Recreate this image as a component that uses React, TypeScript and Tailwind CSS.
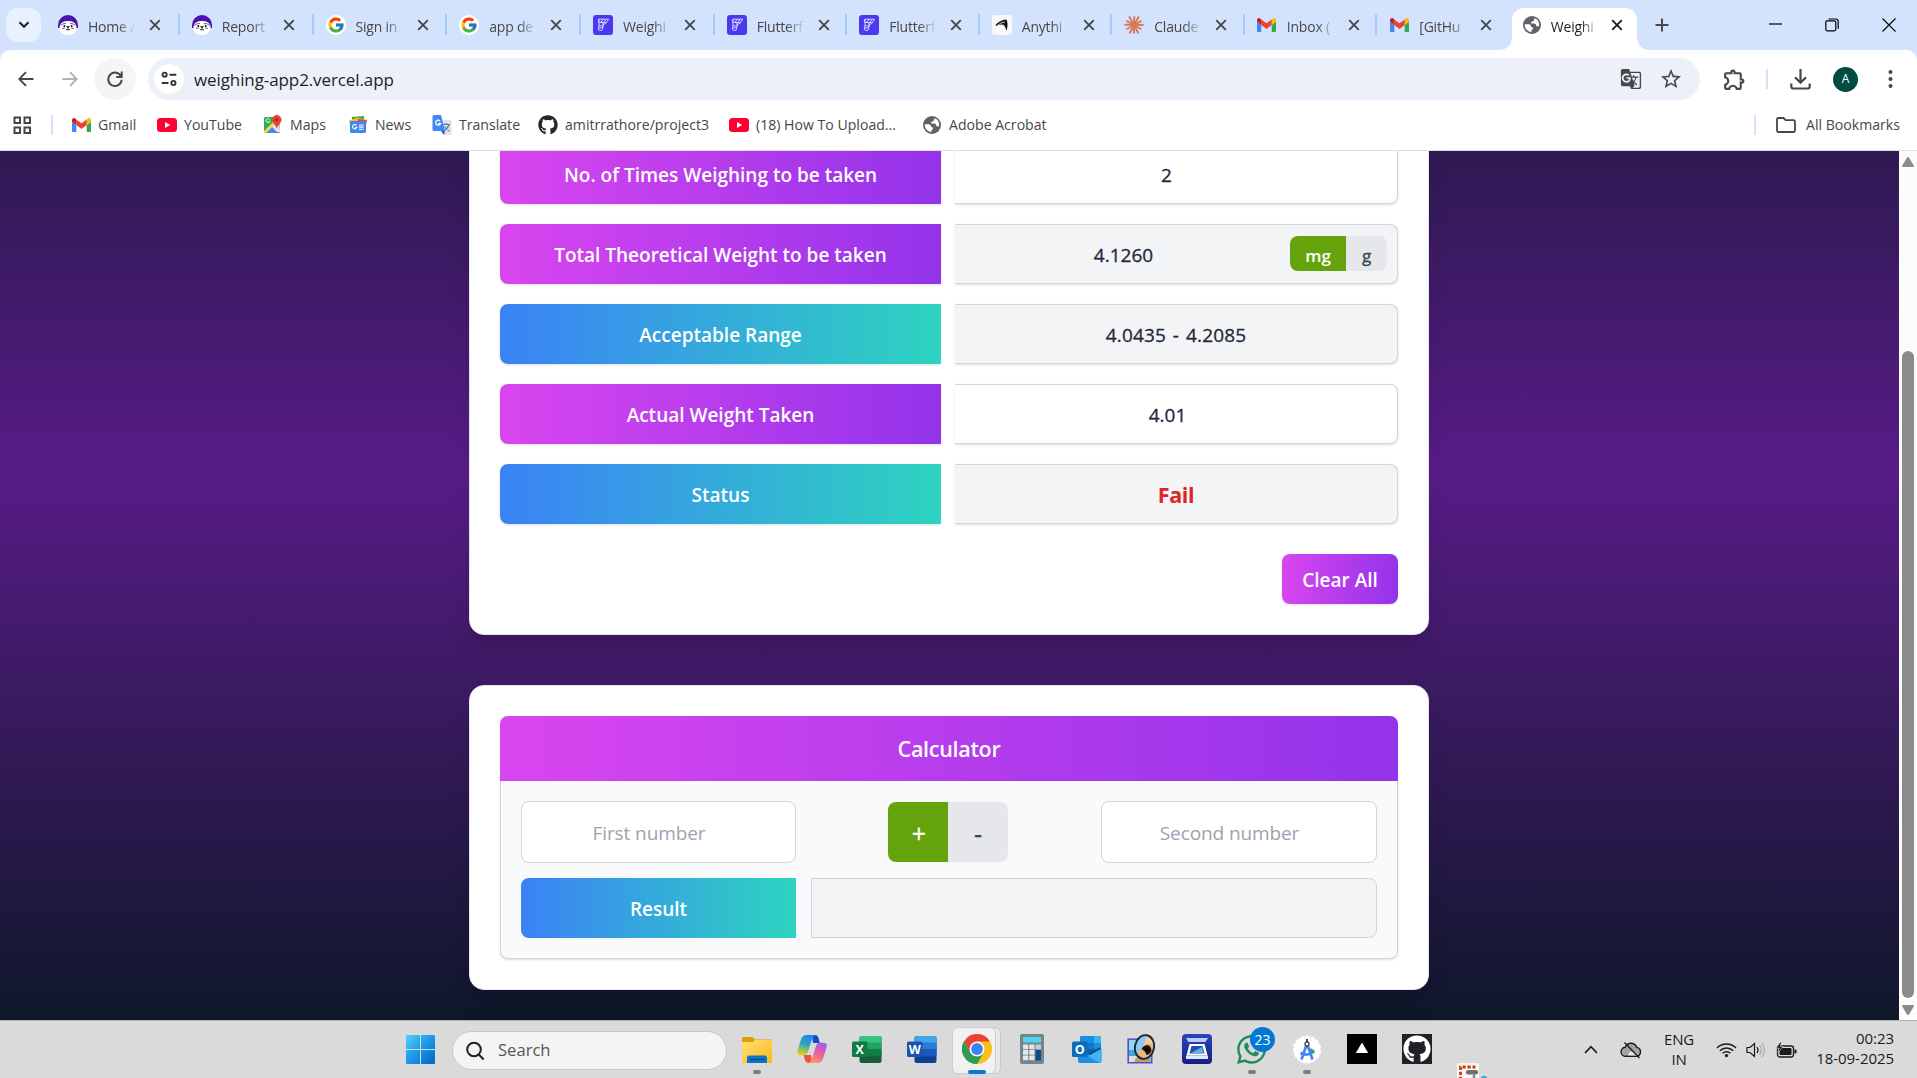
import React from 'react';
import { FcGoogle } from 'react-icons/fc';
import { FaGithub, FaWhatsapp } from 'react-icons/fa';
import { MdGTranslate, MdStarOutline, MdOutlineExtension } from 'react-icons/md';

const GRAPE = 'bg-linear-[90deg,#d946ef,#9333ea]';
const OCEAN = 'bg-linear-[90deg,#3b82f6,#2dd4bf]';

/* ---------- brand icons ---------- */

function SealIcon() {
  return (
    <svg width="20" height="20" viewBox="0 0 20 20">
      <path d="M0 10a10 10 0 0 1 20 0v3H0z" fill="#4a12b4" />
      <path d="M1.500 14V11Q3 6 10 6t8.500 5v3Q17 20 10 20T1.500 14z" fill="#fff" />
      <path d="M2.200 10.500Q5 8 8 8.500M17.800 10.500Q15 8 12 8.500" stroke="#444" strokeWidth=".8" fill="none" />
      <circle cx="6.300" cy="11" r="1" fill="#111" />
      <circle cx="13.700" cy="11" r="1" fill="#111" />
      <path d="M8.500 11.500h3L10 13zM10 13v1.500M8 14.500q2 1 4 0M4 13.500l3-.6M16 13.500l-3-.6" stroke="#222" strokeWidth=".7" fill="#111" />
    </svg>
  );
}

function GoogleIcon() {
  return (
    <span className="flex size-5 items-center justify-center rounded-full bg-white">
      <FcGoogle size={18} />
    </span>
  );
}

function FlutterFlowIcon() {
  return (
    <svg width="20" height="20" viewBox="0 0 20 20">
      <rect width="20" height="20" rx="3" fill="#4b39ef" />
      <path
        d="M6 4.200h9.700l-3.200 4.600-2 .2-1.200 5.800q-2.300 1.800-4-.3l.6-3zM6 4.200q-1.800 2 .2 3.300M6.200 7.500h6.600M5.800 10.600q3 1.500 5-1.300M5.600 13q3.500.8 5-2.500M10.500 4.500L6.800 7.800M13 4.500L9 9.500"
        fill="none"
        stroke="#d9d4ff"
        strokeWidth="1"
        strokeLinejoin="round"
      />
    </svg>
  );
}

function AnythingIcon() {
  return (
    <svg width="20" height="20" viewBox="0 0 20 20">
      <rect width="20" height="20" rx="3" fill="#f8f8f8" />
      <path d="M3 11Q7 5 14.500 4.500Q16.500 9 14.500 15.800Q13.500 11.500 11.500 9.800Q8 8.800 3 11z" fill="#111" />
      <path d="M5.500 10.500Q9 7 13 7" stroke="#f8f8f8" strokeWidth=".8" fill="none" />
    </svg>
  );
}

function ClaudeIcon() {
  return (
    <svg width="20" height="20" viewBox="-10 -10 20 20">
      {[0, 30, 62, 90, 118, 150, 182, 208, 240, 272, 300, 332].map((a, i) => (
        <path key={a} d={i % 2 ? 'M0 0L8.600 0' : 'M0 0L9.700 0'} transform={`rotate(${a})`} stroke="#d97757" strokeWidth="1.900" />
      ))}
    </svg>
  );
}

function GmailIcon({ size = 19 }: { size?: number }) {
  return (
    <svg width={size} height={size * 0.76} viewBox="52 42 88 66">
      <path fill="#4285f4" d="M58 108h14V74L52 59v43c0 3.320 2.690 6 6 6" />
      <path fill="#34a853" d="M120 108h14c3.320 0 6-2.690 6-6V59l-20 15" />
      <path fill="#fbbc04" d="M120 48v26l20-15v-8c0-7.420-8.470-11.650-14.400-7.200" />
      <path fill="#ea4335" d="M72 74V48l24 18 24-18v26L96 92" />
      <path fill="#c5221f" d="M52 51v8l20 15V48l-5.600-4.200c-5.940-4.450-14.400-.22-14.400 7.200" />
    </svg>
  );
}

function GlobeIcon() {
  return (
    <svg width="18" height="18" viewBox="0 0 18 18">
      <circle cx="9" cy="9" r="9" fill="#5f6368" />
      <path d="M1.800 8.300h4q2 0 2.200 2 .3 1.200 2 1.200V13q-1.800.5-1.800 3.200A7.200 7.200 0 0 1 1.800 8.300z" fill="#fff" />
      <path d="M11.500 2.300Q16.200 4 16.200 9q-.3 1.500-1.700 1.500-1.500 0-1.500-1.700-.4-1.400-2-1.400H8.300V5.700q2.700.1 2.700-1.700z" fill="#fff" />
    </svg>
  );
}

function YouTubeIcon() {
  return (
    <svg width="20" height="14" viewBox="0 0 20 14">
      <rect width="20" height="14" rx="3.500" fill="#ff0033" />
      <path d="M8 4l5.200 3L8 10z" fill="#fff" />
    </svg>
  );
}

function MapsIcon() {
  return (
    <svg width="20" height="19" viewBox="0 0 20 19">
      <rect x="1" y="2" width="16" height="16" rx="1.500" fill="#34a853" />
      <path d="M1 17L16 3l1 14z" fill="#e8eaed" />
      <path d="M3 18l6-6 6 6z" fill="#4285f4" />
      <path d="M1 16L14 3l2 2L3 18H1z" fill="#fbd04b" />
      <path d="M13.800 0a4.700 4.700 0 0 0-4.700 4.700c0 3.300 3.700 5 4.700 9.300 1-4.300 4.700-6 4.700-9.300A4.700 4.700 0 0 0 13.800 0z" fill="#ea4335" />
      <circle cx="13.800" cy="4.700" r="1.600" fill="#a02a20" />
      <path d="M6.800 4.600a2 2 0 1 0 .2 1.700H5.500" fill="none" stroke="#fff" strokeWidth=".9" />
    </svg>
  );
}

function NewsIcon() {
  return (
    <svg width="18" height="17" viewBox="0 0 18 17">
      <path d="M3 1l12-1v8H3z" fill="#34a853" />
      <path d="M0 4.500l8-3 8 2v5H1z" fill="#fbbc04" />
      <path d="M9 3l9 1-1 5H8z" fill="#ea4335" />
      <rect x="1" y="5" width="16" height="12" rx="1.500" fill="#4285f4" />
      <path d="M7.500 9.300a2.200 2.200 0 1 0 .4 2H5.800M10 9h4.500M10 11.100h4.500M10 13.200h4.500" stroke="#fff" strokeWidth="1.100" fill="none" />
    </svg>
  );
}

function TranslateIcon() {
  return (
    <svg width="20" height="20" viewBox="0 0 20 20">
      <path d="M7 5h11a1.500 1.500 0 0 1 1.500 1.500v12A1.500 1.500 0 0 1 18 20h-6z" fill="#dfe2e6" />
      <path d="M11 9.500h7M14.500 8v1.500M17 9.500q-1 4-5 6M12.500 11.500q1.500 3 5 4.500" stroke="#5f7d95" strokeWidth="1.200" fill="none" />
      <path d="M2 0h7l4 16H2a1.500 1.500 0 0 1-1.500-1.500v-13A1.500 1.500 0 0 1 2 0z" fill="#4285f4" />
      <path d="M8 6a2.500 2.500 0 1 0 .5 2.500H6" stroke="#fff" strokeWidth="1.300" fill="none" />
      <path d="M9 16h4l-1 4z" fill="#3a5bbf" />
    </svg>
  );
}

/* ---------- browser chrome ---------- */

function CloseX({ dark = false }: { dark?: boolean }) {
  return (
    <svg width="12" height="12" viewBox="0 0 12 12" stroke={dark ? '#1f1f1f' : '#474747'} strokeWidth="1.900">
      <path d="M1.200 1.200l9.600 9.600M10.800 1.200l-9.600 9.600" />
    </svg>
  );
}

const tabs: { icon: React.ReactNode; title: string; width: string }[] = [
  { icon: <SealIcon />, title: 'Home /', width: 'w-[133.750px]' },
  { icon: <SealIcon />, title: 'Report', width: 'w-[133.750px]' },
  { icon: <GoogleIcon />, title: 'Sign in', width: 'w-[133.750px]' },
  { icon: <GoogleIcon />, title: 'app de', width: 'w-[133.750px]' },
  { icon: <FlutterFlowIcon />, title: 'Weighi', width: 'w-[133.750px]' },
  { icon: <FlutterFlowIcon />, title: 'Flutterf', width: 'w-[132.500px]' },
  { icon: <FlutterFlowIcon />, title: 'Flutterf', width: 'w-[132.500px]' },
  { icon: <AnythingIcon />, title: 'Anythi', width: 'w-[132.500px]' },
  { icon: <ClaudeIcon />, title: 'Claude', width: 'w-[132.500px]' },
  { icon: <GmailIcon />, title: 'Inbox (', width: 'w-[132.500px]' },
  { icon: <GmailIcon />, title: '[GitHu', width: 'w-[132.500px]' },
];

const TITLE = 'ml-[10px] mt-[2px] w-[48px] overflow-hidden whitespace-nowrap text-[14px] tracking-[-0.200px] mask-[linear-gradient(90deg,#000_62%,transparent_100%)]';

function TabStrip() {
  return (
    <div className="flex h-[50px] bg-[#d3e3fd]">
      <div className="ml-[6px] mt-2 flex h-[34px] w-[35px] items-center justify-center rounded-[12px] bg-[#e9f0fe]">
        <svg width="12" height="8" viewBox="0 0 12 8" fill="none" stroke="#1f1f1f" strokeWidth="2">
          <path d="M1.500 1.300L6 5.800l4.500-4.500" />
        </svg>
      </div>
      <div className="ml-1 flex">
        {tabs.map((t, i) => (
          <div key={i} className={`relative flex h-[50px] items-center pl-[13px] ${t.width}`}>
            <span className="flex w-5 justify-center">{t.icon}</span>
            <span className={`text-[#474747] ${TITLE}`}>{t.title}</span>
            <span className="ml-[13px] flex">
              <CloseX />
            </span>
            {i < 10 && <span className="absolute right-[-1px] top-[14px] h-[21px] w-[2px] rounded bg-[#a8c7fa]" />}
          </div>
        ))}
      </div>
      <div className="relative ml-[3px] mt-2 flex h-[42px] w-[125px] items-center rounded-t-[12px] bg-white pb-2 pl-[11px]">
        <svg className="absolute bottom-0 left-[-14px]" width="14" height="14" viewBox="0 0 14 14">
          <path d="M14 0v14H0Q14 14 14 0z" fill="#fff" />
        </svg>
        <svg className="absolute bottom-0 right-[-14px]" width="14" height="14" viewBox="0 0 14 14">
          <path d="M0 0v14h14Q0 14 0 0z" fill="#fff" />
        </svg>
        <GlobeIcon />
        <span className={`text-[#1f1f1f] ${TITLE}`}>Weighi</span>
        <span className="ml-[12px] flex">
          <CloseX dark />
        </span>
      </div>
      <div className="ml-[18px] flex items-center">
        <svg width="14" height="14" viewBox="0 0 14 14" stroke="#474747" strokeWidth="2">
          <path d="M7 .5v13M.5 7h13" />
        </svg>
      </div>
      <div className="ml-auto mr-[21px] flex items-center gap-[43px]">
        <svg width="13" height="14" viewBox="0 0 13 14" stroke="#000" strokeWidth="1.200">
          <path d="M0 6h13" />
        </svg>
        <svg width="14" height="14" viewBox="0 0 14 14" fill="none" stroke="#000" strokeWidth="1.200">
          <rect x=".8" y="2.800" width="10" height="10" rx="1.500" />
          <path d="M3.500 1h7.200q2.500 0 2.500 2.500v7.300" />
        </svg>
        <svg width="14" height="14" viewBox="0 0 14 14" stroke="#000" strokeWidth="1.100">
          <path d="M.5.5l13 13M13.500.5l-13 13" />
        </svg>
      </div>
    </div>
  );
}

function Toolbar() {
  return (
    <div className="flex h-[58px] items-center rounded-t-[10px] bg-white">
      <div className="ml-[18px] flex">
        <svg width="16" height="16" viewBox="0 0 16 16" fill="none" stroke="#474747" strokeWidth="1.900">
          <path d="M15.500 8H1.500M8 1.200L1.300 8 8 14.800" />
        </svg>
      </div>
      <div className="ml-[28px] flex">
        <svg width="16" height="16" viewBox="0 0 16 16" fill="none" stroke="#b0b0b0" strokeWidth="1.800">
          <path d="M.5 8h14M8 1.200L14.700 8 8 14.800" />
        </svg>
      </div>
      <div className="ml-4 flex size-[42px] items-center justify-center rounded-full bg-[#f5f5f5]">
        <svg width="18" height="18" viewBox="0 0 18 18" fill="none" stroke="#474747" strokeWidth="2">
          <path d="M15.300 7A6.700 6.700 0 1 0 15.700 9.800M15.700 1.500V7h-5.500" />
        </svg>
      </div>
      <div className="ml-3 flex h-[42px] w-[1552px] items-center rounded-full bg-[#ebf0f9] pl-[6px]">
        <div className="flex size-[30px] items-center justify-center rounded-full bg-white">
          <svg width="16" height="16" viewBox="0 0 16 16" fill="none" stroke="#333" strokeWidth="1.900">
            <circle cx="3.600" cy="3.700" r="2.100" />
            <path d="M8.500 3.700h6.800M.8 12h6.700" />
            <circle cx="12.400" cy="12" r="2.100" />
          </svg>
        </div>
        <span className="ml-[10px] mt-[2px] text-[17px] tracking-[-0.100px] text-[#1f1f1f]">weighing-app2.vercel.app</span>
        <MdGTranslate size={22} className="ml-auto text-[#474747]" />
        <MdStarOutline size={24} className="ml-[17px] mr-[17px] text-[#474747]" />
      </div>
      <MdOutlineExtension size={25} className="ml-[22px] text-[#474747]" />
      <span className="ml-[19px] h-5 w-[2px] bg-[#d3e3fd]" />
      <svg className="ml-[22px]" width="21" height="21" viewBox="0 0 21 21" fill="none" stroke="#474747" strokeWidth="2.200">
        <path d="M10.500 0v13M5 8.200l5.500 5.500L16 8.200M1.300 14.500v3q0 2 2 2h14.400q2 0 2-2v-3" />
      </svg>
      <span className="ml-[22px] flex size-[25px] items-center justify-center rounded-full bg-[#004d40] text-[12px] text-white">A</span>
      <svg className="ml-[30px]" width="5" height="20" viewBox="0 0 5 20" fill="#474747">
        <circle cx="2.500" cy="3" r="2" />
        <circle cx="2.500" cy="10" r="2" />
        <circle cx="2.500" cy="17" r="2" />
      </svg>
    </div>
  );
}

const bookmarks: { icon: React.ReactNode; label: string; cls: string }[] = [
  { icon: <GmailIcon />, label: 'Gmail', cls: 'w-[86px]' },
  { icon: <YouTubeIcon />, label: 'YouTube', cls: 'w-[106px]' },
  { icon: <MapsIcon />, label: 'Maps', cls: 'w-[85px]' },
  { icon: <NewsIcon />, label: 'News', cls: 'w-[84px]' },
  { icon: <TranslateIcon />, label: 'Translate', cls: 'w-[106px]' },
  { icon: <FaGithub size={20} color="#24292e" />, label: 'amitrrathore/project3', cls: 'w-[191px]' },
  { icon: <YouTubeIcon />, label: '(18) How To Upload...', cls: 'w-[193px]' },
  { icon: <GlobeIcon />, label: 'Adobe Acrobat', cls: 'w-[140px]' },
];

function BookmarksBar() {
  return (
    <div className="flex h-[43px] items-center border-b border-[#dedfe1] bg-white pb-[8px] text-[14.100px] text-[#474747]">
      <svg className="ml-[13px]" width="19" height="19" viewBox="0 0 19 19" fill="none" stroke="#474747" strokeWidth="2">
        <rect x="1.500" y="1.500" width="5.500" height="5.500" />
        <rect x="11.500" y="1.500" width="5.500" height="5.500" />
        <rect x="1.500" y="11.500" width="5.500" height="5.500" />
        <rect x="11.500" y="11.500" width="5.500" height="5.500" />
      </svg>
      <span className="ml-[19px] h-5 w-[2px] bg-[#d3e3fd]" />
      <div className="ml-[18px] flex">
        {bookmarks.map((b) => (
          <div key={b.label} className={`flex items-center whitespace-nowrap ${b.cls}`}>
            <span className="mr-[7px] flex w-5 shrink-0 justify-center">{b.icon}</span>
            {b.label}
          </div>
        ))}
      </div>
      <span className="ml-auto h-5 w-[2px] bg-[#d3e3fd]" />
      <svg className="ml-5" width="20" height="16" viewBox="0 0 20 16" fill="none" stroke="#474747" strokeWidth="1.800">
        <path d="M2.500 1h5l2.200 2.200h7.800q1.500 0 1.500 1.500v8.800q0 1.500-1.500 1.500h-15Q1 15 1 13.500v-11Q1 1 2.500 1z" />
      </svg>
      <span className="ml-[10px] mr-[17px]">All Bookmarks</span>
    </div>
  );
}

/* ---------- weighing page ---------- */

function Label({ tone, children }: { tone: string; children: React.ReactNode }) {
  return (
    <div
      className={`flex h-[60px] w-[441px] items-center justify-center rounded-l-[8px] pt-[2px] text-[19px] font-semibold text-white shadow ${tone}`}
    >
      {children}
    </div>
  );
}

function Value({ filled = false, children }: { filled?: boolean; children: React.ReactNode }) {
  return (
    <div
      className={`flex h-[60px] w-[443px] items-center rounded-r-[8px] border border-l-0 border-[#d1d5db] text-[19px] font-medium text-[#1f2937] shadow ${filled ? 'bg-[#f3f4f6]' : 'bg-white'}`}
    >
      {children}
    </div>
  );
}

const FIGURE = 'flex-1 pt-[2px] text-center [-webkit-text-stroke:0.300px_currentColor]';

function Row({ children }: { children: React.ReactNode }) {
  return <div className="flex gap-[14px]">{children}</div>;
}

function WeighingCard() {
  return (
    <section className="flex h-[580px] w-[960px] flex-col justify-end rounded-[15px] border border-[#e5e7eb] bg-white px-[30px] pb-[30px] shadow-xl shadow-black/10">
      <div className="flex flex-col gap-5">
        <Row>
          <Label tone={GRAPE}>No. of Times Weighing to be taken</Label>
          <Value>
            <span className={`pr-[19px] ${FIGURE}`}>2</span>
          </Value>
        </Row>
        <Row>
          <Label tone={GRAPE}>Total Theoretical Weight to be taken</Label>
          <Value filled>
            <span className={`pl-[2px] ${FIGURE}`}>4.1260</span>
            <div className="mb-px mr-[10px] flex h-[35px] overflow-hidden rounded-[8px] text-[17px]">
              <span className="flex w-14 items-center justify-center bg-[#65a30d] pt-1 font-semibold text-white">mg</span>
              <span className="flex w-[41px] items-center justify-center bg-[#e5e7eb] pt-1 text-[#374151] [-webkit-text-stroke:0.300px_currentColor]">
                g
              </span>
            </div>
          </Value>
        </Row>
        <Row>
          <Label tone={OCEAN}>Acceptable Range</Label>
          <Value filled>
            <span className={`tracking-[0.150px] [word-spacing:1.800px] ${FIGURE}`}>4.0435 - 4.2085</span>
          </Value>
        </Row>
        <Row>
          <Label tone={GRAPE}>Actual Weight Taken</Label>
          <Value>
            <span className={`pr-[17px] ${FIGURE}`}>4.01</span>
          </Value>
        </Row>
        <Row>
          <Label tone={OCEAN}>Status</Label>
          <Value filled>
            <span className="flex-1 pt-[2px] text-center text-[21.500px] font-bold tracking-[-0.400px] text-[#dc2626]">Fail</span>
          </Value>
        </Row>
      </div>
      <div className="mt-[30px] flex justify-end">
        <button className={`h-[50px] w-[116px] whitespace-nowrap rounded-[8px] pt-[2px] text-[19px] font-semibold text-white shadow ${GRAPE}`}>
          Clear All
        </button>
      </div>
    </section>
  );
}

function CalculatorCard() {
  return (
    <section className="mt-[50px] h-[305px] w-[960px] rounded-[15px] border border-[#e5e7eb] bg-white p-[30px] shadow-xl shadow-black/10">
      <div className={`flex h-[65px] items-center justify-center rounded-t-[8px] pt-[2px] text-[21.500px] font-semibold tracking-[-0.300px] text-white ${GRAPE}`}>
        Calculator
      </div>
      <div className="flex h-[178px] flex-col gap-[15px] rounded-b-[8px] border border-t-0 border-[#d1d5db] bg-[#f9fafb] px-5 pt-5 shadow">
        <div className="flex items-center">
          <div className="flex h-[62px] w-[275px] items-center justify-center rounded-[8px] border border-[#d1d5db] bg-white pr-[21px] pt-[2px] text-[19px] tracking-[-0.100px] text-[#9ca3af]">
            <span className="pl-[2px]">First number</span>
          </div>
          <div className="ml-[92px] flex h-[60px] overflow-hidden rounded-[8px] text-[25px] font-medium">
            <span className="flex w-[60px] items-center justify-center bg-[#65a30d] pl-0.5 pt-1 text-white [-webkit-text-stroke:0.300px_currentColor]">+</span>
            <span className="flex w-[60px] items-center justify-center bg-[#e5e7eb] pt-1 text-[#374151] [-webkit-text-stroke:0.300px_currentColor]">-</span>
          </div>
          <div className="ml-auto flex h-[62px] w-[276px] items-center justify-center rounded-[8px] border border-[#d1d5db] bg-white pr-[19px] pt-[2px] text-[19px] tracking-[-0.100px] text-[#9ca3af]">
            Second number
          </div>
        </div>
        <div className="flex gap-[15px]">
          <div className={`flex h-[60px] w-[275px] items-center justify-center rounded-l-[8px] pt-[2px] text-[19px] font-semibold text-white ${OCEAN}`}>
            Result
          </div>
          <div className="h-[60px] flex-1 rounded-r-[8px] border border-[#d1d5db] bg-[#f3f4f6]" />
        </div>
      </div>
    </section>
  );
}

function PageView() {
  return (
    <div className="flex h-[869px] bg-white">
      <main className="flex w-[1899px] flex-col justify-end overflow-hidden">
        <div className="flex h-[1100px] shrink-0 flex-col items-center justify-end bg-linear-[180deg,#0f172a,#581c87,#0f172a] pb-[30px] pr-px">
          <WeighingCard />
          <CalculatorCard />
        </div>
      </main>
      <div className="flex w-[18px] flex-col items-center bg-[#fcfcfc] pb-[5px] pt-[6px]">
        <svg width="12" height="10" viewBox="0 0 12 10" fill="#8b8b8b">
          <path d="M6 0q.8 0 1.300.9L12 9q0 1-1 1H1Q0 10 0 9L4.700.9Q5.200 0 6 0z" />
        </svg>
        <div className="mt-[184px] h-[647px] w-3 rounded-full bg-[#8b8b8b]" />
        <svg className="mt-auto" width="12" height="10" viewBox="0 0 12 10" fill="#8b8b8b">
          <path d="M6 10q-.8 0-1.300-.9L0 1q0-1 1-1h10q1 0 1 1L7.300 9.100Q6.800 10 6 10z" />
        </svg>
      </div>
    </div>
  );
}

/* ---------- taskbar ---------- */

function WindowsIcon() {
  return (
    <svg width="29" height="29" viewBox="0 0 29 29">
      <defs>
        <linearGradient id="win" x1="0" y1="0" x2="29" y2="29" gradientUnits="userSpaceOnUse">
          <stop offset="0" stopColor="#53d1fb" />
          <stop offset=".5" stopColor="#1a96e8" />
          <stop offset="1" stopColor="#0067c4" />
        </linearGradient>
      </defs>
      <path d="M1 0h13v14H0V1q0-1 1-1zM15 0h13q1 0 1 1v13H15zM0 15h14v14H1q-1 0-1-1zM15 15h14v13q0 1-1 1H15z" fill="url(#win)" />
    </svg>
  );
}

function ExplorerIcon() {
  return (
    <svg width="30" height="27" viewBox="0 0 30 27">
      <defs>
        <linearGradient id="fold" x1="0" y1="0" x2="1" y2="1">
          <stop offset="0" stopColor="#ffe07a" />
          <stop offset="1" stopColor="#fbb914" />
        </linearGradient>
      </defs>
      <path d="M0 2Q0 1 1 1h9q1 0 1.500.7L13 3.500h16q1 0 1 1V8H0z" fill="#dd9c08" />
      <path d="M0 6h10.500L13 4h17v22q0 1-1 1H1q-1 0-1-1z" fill="url(#fold)" />
      <path d="M5 27v-5q0-2.500 2.500-2.500h15Q25 19.500 25 22v5z" fill="#0a74c9" />
      <path d="M8 23.500h14" stroke="#08477f" strokeWidth="1.300" />
    </svg>
  );
}

function CopilotIcon() {
  return (
    <svg width="30" height="28" viewBox="0 0 30 28">
      <defs>
        <linearGradient id="cpa" x1=".5" y1="0" x2=".3" y2="1">
          <stop offset="0" stopColor="#1b86ea" />
          <stop offset=".45" stopColor="#2ba7c0" />
          <stop offset=".75" stopColor="#8bc85a" />
          <stop offset="1" stopColor="#f5cb1c" />
        </linearGradient>
        <linearGradient id="cpb" x1=".7" y1="0" x2=".3" y2="1">
          <stop offset="0" stopColor="#a05cf0" />
          <stop offset=".5" stopColor="#e8609f" />
          <stop offset="1" stopColor="#fd9a5a" />
        </linearGradient>
      </defs>
      <path d="M15 0h3q2.500 0 3.500 3l1.300 5H16z" fill="#1b48c8" />
      <path d="M15 28h-3.500Q9 28 8 25l-1.500-5H14z" fill="#f0503c" />
      <path d="M9.500 0h9q-2.300.5-3.200 3.500L11 17q-1 3.300-4 3.300H4Q-.5 20.300.3 16L4 4.500Q5.500 0 9.500 0z" fill="url(#cpa)" />
      <path d="M20.500 28h-9q2.300-.5 3.200-3.500L19 11q1-3.300 4-3.300h3q4.500 0 3.700 4.300L26 23.500Q24.500 28 20.500 28z" fill="url(#cpb)" />
    </svg>
  );
}

function OfficeTile({ letter, tile, bands }: { letter: string; tile: string; bands: string[] }) {
  return (
    <svg width="30" height="29" viewBox="0 0 30 29">
      <rect x="7.500" y="1" width="22" height="27" rx="2" fill={bands[3]} />
      <path d="M9.500 1h18q2 0 2 2v5h-22V3q0-2 2-2z" fill={bands[0]} />
      <path d="M7.500 7.500h22v7h-22z" fill={bands[1]} />
      <path d="M7.500 14.300h22v7h-22z" fill={bands[2]} />
      <rect x="0" y="6.500" width="15.500" height="15.500" rx="1.500" fill={tile} />
      <text x="7.700" y="18.500" textAnchor="middle" fontSize="12.500" fontWeight="700" fill="#fff">
        {letter}
      </text>
    </svg>
  );
}

function ChromeIcon() {
  return (
    <svg width="30" height="30" viewBox="-15 -15 30 30">
      <path d="M0 0L-13 -7.500A15 15 0 0 1 13 -7.500z" fill="#ea4335" />
      <path d="M0 -7.500H13A15 15 0 0 1 0 15L6.500 3.750z" fill="#fbc116" />
      <path d="M-13 -7.500A15 15 0 0 0 0 15L6.500 3.750 0 5-6.500 3.750z" fill="#34a853" />
      <path d="M-13 -7.500H0V0L-6.500 3.750z" fill="#ea4335" />
      <path d="M-13 -7.500L-6.500 3.750A7.500 7.500 0 0 0 6.500 3.750L0 15A15 15 0 0 1 -13 -7.500z" fill="#2f9e4f" />
      <circle r="7.500" fill="#fff" />
      <circle r="5.900" fill="#3c82f4" />
    </svg>
  );
}

function CalcIcon() {
  return (
    <svg width="24" height="30" viewBox="0 0 24 30">
      <rect width="24" height="30" rx="2" fill="#78838b" />
      <rect x="3" y="3" width="18" height="5.500" rx=".7" fill="#4fd6f7" />
      {[10.5, 16, 21.5].map((y) => [3, 9.3].map((x) => <rect key={`${x}-${y}`} x={x} y={y} width="5.300" height="4.700" rx=".6" fill="#e4e7e9" />))}
      <rect x="15.600" y="10.500" width="5.400" height="4.700" rx=".6" fill="#c3cdd4" />
      <rect x="15.600" y="16" width="5.400" height="10.500" rx=".6" fill="#0f4c87" />
    </svg>
  );
}

function OutlookIcon() {
  return (
    <svg width="30" height="29" viewBox="0 0 30 29">
      <rect x="8" y="1" width="21" height="20" rx="2" fill="#0a64b4" />
      <path d="M10 1h5v7H8V3q0-2 2-2z" fill="#1490df" />
      <path d="M15 1h7v7h-7zM22 8h7v6h-7z" fill="#1a8fe0" />
      <path d="M22 1h5q2 0 2 2v5h-7z" fill="#35b4ee" />
      <path d="M15 8h7v6h-7z" fill="#0f78d4" />
      <path d="M6 13l12 7 11.500-6v12q0 2-2 2H8q-2 0-2-2z" fill="#1c8fe0" />
      <path d="M29.500 14v12q0 2-2 2L15 20.500l3-.5z" fill="#41b5f0" />
      <path d="M29.500 13l-11.500 7-2-1 11-6.500z" fill="#0a4f94" />
      <rect x="0" y="6.500" width="15.500" height="15.500" rx="1.500" fill="#0f6cbd" />
      <text x="7.700" y="18.500" textAnchor="middle" fontSize="12.500" fontWeight="700" fill="#fff">
        O
      </text>
    </svg>
  );
}

function EyeViewerIcon() {
  return (
    <svg width="30" height="30" viewBox="0 0 30 30">
      <rect x="1.200" y="5.200" width="23.500" height="23.500" fill="#8fd6ee" stroke="#5550cf" strokeWidth="1.600" />
      <path d="M2 16h8v6H2z" fill="#49a3d8" />
      <path d="M2 22h10l-3 6H2z" fill="#d8e3e2" />
      <path d="M9 24l5-3 9 3v4H7z" fill="#c49a68" />
      <path d="M17 1Q27 1 27 11.500T19 25Q8 24 8 14T17 1z" fill="#e3b883" />
      <path d="M17 1Q8 3 8 14l2 5 5-5 5-12z" fill="#8fc9f2" />
      <path d="M20 2q7 3 6.500 9l-6-2-5 6z" fill="#eccda4" />
      <path d="M14.500 15q2-4 6-4 4 1 4 6-2 4-5 4-1-4-5-6z" fill="#2b150b" />
      <circle cx="20" cy="15.500" r="2.500" fill="#080505" />
      <ellipse cx="17.500" cy="13" rx="9.500" ry="12" fill="none" stroke="#12283d" strokeWidth="1.900" transform="rotate(12 17.500 13)" />
    </svg>
  );
}

function ScannerIcon() {
  return (
    <svg width="30" height="30" viewBox="0 0 30 30">
      <defs>
        <linearGradient id="scan" x1="0" y1="0" x2="0" y2="1">
          <stop offset="0" stopColor="#2b45bd" />
          <stop offset="1" stopColor="#141f80" />
        </linearGradient>
      </defs>
      <rect width="30" height="30" rx="4" fill="url(#scan)" />
      <path d="M4 4h22l-2.500 4h-17z" fill="#bccbf2" />
      <path d="M7.500 10h15l3 11.500h-21z" fill="#fff" />
      <path d="M9.500 12h11l2 7.500h-15z" fill="#234db5" />
      <path d="M9 19l11-6 1.500 6z" fill="#58b6e8" />
      <rect x="4" y="21.500" width="22" height="3.500" fill="#e3eafb" />
    </svg>
  );
}

function StudioIcon() {
  return (
    <svg width="28" height="29" viewBox="-14 -14.500 28 29">
      <circle r="13" fill="#fff" stroke="#fff" strokeWidth="2" strokeDasharray="4 1.400" />
      <path d="M3 -1a5 4 0 0 1 5 4l-5 1z" fill="#34a853" />
      <path d="M-5.500 10L0 -6 5.500 10M-6.500 3.500Q0 7 6.500 2.500" fill="none" stroke="#4285f4" strokeWidth="2.700" />
      <path d="M0 -10.500v3" stroke="#37474f" strokeWidth="2" />
      <circle cy="-5.500" r="2" fill="#fff" stroke="#37474f" strokeWidth="1.300" />
    </svg>
  );
}

const apps: { icon: React.ReactNode; dot?: string }[] = [
  { icon: <ExplorerIcon />, dot: 'w-2 bg-[#7c7c7c]' },
  { icon: <CopilotIcon /> },
  { icon: <OfficeTile letter="X" tile="#107c41" bands={['#33c481', '#21a366', '#107c41', '#185c37']} /> },
  { icon: <OfficeTile letter="W" tile="#1a54b0" bands={['#41a5ee', '#2b7cd3', '#185abd', '#103f91']} /> },
  { icon: <ChromeIcon />, dot: 'w-[18px] bg-[#0a78d4]' },
  { icon: <CalcIcon /> },
  { icon: <OutlookIcon /> },
  { icon: <EyeViewerIcon /> },
  { icon: <ScannerIcon /> },
  { icon: <FaWhatsapp size={33} color="#1f8f56" />, dot: 'w-2 bg-[#7c7c7c]' },
  { icon: <StudioIcon />, dot: 'w-2 bg-[#7c7c7c]' },
  {
    icon: (
      <svg width="30" height="30" viewBox="0 0 30 30">
        <rect width="30" height="30" />
        <path d="M15 8.500l6.200 10.500H8.800z" fill="#fff" />
      </svg>
    ),
  },
  {
    icon: (
      <span className="flex size-[30px] items-center justify-center bg-[#24202a]">
        <FaGithub size={28} color="#fff" />
      </span>
    ),
  },
];

function Tray() {
  return (
    <div className="ml-auto flex items-center text-[15px] leading-5 text-[#1b1b1b]">
      <svg width="14" height="9" viewBox="0 0 14 9" fill="none" stroke="#1b1b1b" strokeWidth="1.700">
        <path d="M1 8l6-6.300L13 8" />
      </svg>
      <svg className="ml-[22px]" width="22" height="18" viewBox="0 0 22 18" fill="none" stroke="#1b1b1b" strokeWidth="1.400">
        <path d="M6 15.300a4.500 4.500 0 0 1-.8-9Q7 2.200 11 2.200t5.800 4.200a4.500 4.500 0 0 1-.3 8.900z" fill="#a4a4a4" />
        <path d="M8 14.600q1-4.600 5-4.100t4.500 4.100z" fill="#e6e6e6" stroke="none" />
        <path d="M4.500 1.500l15 15.500" />
      </svg>
      <div className="mb-[2px] ml-[22px] w-[30px] text-center tracking-[-0.200px]">
        ENG
        <br />
        IN
      </div>
      <svg className="ml-[22px]" width="21" height="16" viewBox="0 0 21 16" fill="none" stroke="#1b1b1b" strokeWidth="1.400">
        <path d="M1 6a13.400 13.400 0 0 1 19 0M3.800 8.700a9.500 9.500 0 0 1 13.400 0M6.600 11.300a5.500 5.500 0 0 1 7.800 0" />
        <circle cx="10.500" cy="13.600" r="1.700" fill="#1b1b1b" stroke="none" />
      </svg>
      <svg className="ml-[9px]" width="20" height="16" viewBox="0 0 20 16" fill="none" stroke="#1b1b1b" strokeWidth="1.200">
        <path d="M1 5.500h3L8.500 1.500v13L4 10.500H1zM11 5q2 3 0 6" />
        <path d="M13.500 3q3.500 5 0 10M16 1q5 7 0 14" stroke="#aaa" />
      </svg>
      <svg className="ml-[10px]" width="21" height="16" viewBox="0 0 21 16">
        <rect x="1.500" y="4" width="16" height="11" rx="2.500" fill="none" stroke="#1b1b1b" strokeWidth="1.300" />
        <rect x="3.500" y="6" width="12" height="7" rx="1" fill="#1b1b1b" />
        <path d="M18.500 7.500h1q1 0 1 1v2q0 1-1 1h-1z" fill="#1b1b1b" />
        <path d="M4.500 0L0 6h3L2 10.500 7 4.500H4.200L5.500 0z" fill="#1b1b1b" stroke="#dadada" strokeWidth=".6" />
      </svg>
      <div className="mb-[3px] ml-[17px] mr-[23px] w-[80px] text-right tracking-[-0.050px]">
        00:23
        <br />
        18-09-2025
      </div>
    </div>
  );
}

function Taskbar() {
  return (
    <div className="flex h-[58px] overflow-hidden border-t border-[#aeaeae] bg-[#dadada]">
      <div className="ml-[406px] flex items-center pb-px">
        <WindowsIcon />
      </div>
      <div className="ml-[17px] mt-[10px] flex h-[39px] w-[275px] items-center rounded-full border border-[#c6c6c6] bg-[#f4f4f4] text-[16.600px] text-[#555]">
        <svg className="ml-[13px] mr-[13px]" width="19" height="20" viewBox="0 0 19 20" fill="none" stroke="#222" strokeWidth="2">
          <circle cx="8" cy="8.500" r="6.800" />
          <path d="M12.700 13.500l5 5" />
        </svg>
        Search
      </div>
      <div className="ml-[2px] flex">
        {apps.map((a, i) => (
          <div key={i} className="relative flex w-[55px] items-center justify-center">
            {i === 4 && (
              <>
                <span className="absolute left-[8px] top-[6px] h-[47px] w-[44px] rounded-[6px] border border-[#c9c9c9] bg-[#e8e8e8]" />
                <span className="absolute left-[3px] top-[6px] h-[47px] w-[44px] rounded-[6px] border border-[#cfcfcf] bg-[#f1f1f1]" />
              </>
            )}
            <span className="relative mb-px flex">{a.icon}</span>
            {i === 9 && (
              <span className="absolute left-[26px] top-[6px] flex size-[25px] items-center justify-center rounded-full bg-[#0078d4] text-[14px] text-white">23</span>
            )}
            {a.dot && (
              <span className="absolute inset-x-0 top-[49px] flex justify-center">
                <span className={`h-1 rounded-full ${a.dot}`} />
              </span>
            )}
          </div>
        ))}
      </div>
      <svg className="ml-[13px] mt-[42px]" width="30" height="30" viewBox="0 0 30 30">
        <rect width="22" height="30" rx="2" fill="#f6f6f6" />
        <path d="M3.500 22V4h15" fill="none" stroke="#d83b01" strokeWidth="2.800" strokeDasharray="3.200 1.800" />
        <rect x="9" y="7" width="12" height="4.500" rx="2" fill="#6b7074" />
        <path d="M17 11.500v5" stroke="#85898c" strokeWidth="2.500" />
        <circle cx="27" cy="16" r="2.300" fill="none" stroke="#2aa0e6" strokeWidth="1.800" />
      </svg>
      <Tray />
    </div>
  );
}

export default function App() {
  return (
    <div className="flex h-[1078px] w-[1917px] flex-col overflow-hidden bg-[#d3e3fd] font-['Open_Sans','Noto_Sans',sans-serif]">
      <TabStrip />
      <Toolbar />
      <BookmarksBar />
      <PageView />
      <Taskbar />
    </div>
  );
}
